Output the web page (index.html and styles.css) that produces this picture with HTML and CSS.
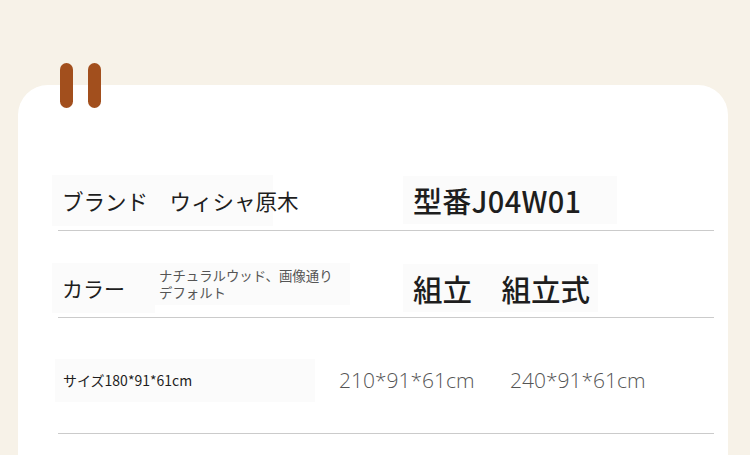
FILE: index.html
```html
<!DOCTYPE html>
<html lang="ja">
<head>
<meta charset="utf-8">
<link rel="stylesheet" href="styles.css">
</head>
<body>
<div class="page">
  <div class="tabs">
    <span class="tab tab-a"></span>
    <span class="tab tab-b"></span>
  </div>
  <div class="card">
    <div class="row row-1">
      <div class="cell lbl-1">ブランド　ウィシャ原木</div>
      <div class="cell val-1">型番J04W01</div>
    </div>
    <div class="row row-2">
      <div class="cell lbl-2">カラー</div>
      <div class="cell note"><span class="note-line">ナチュラルウッド、画像通り</span><span class="note-line">デフォルト</span></div>
      <div class="cell val-2">組立　組立式</div>
    </div>
    <div class="row row-3">
      <div class="cell lbl-3">サイズ180*91*61cm</div>
      <div class="size size-a">210*91*61cm</div>
      <div class="size size-b">240*91*61cm</div>
    </div>
  </div>
</div>
</body>
</html>
```
FILE: styles.css
```css
* { box-sizing: border-box; }
html, body { margin: 0; padding: 0; }
body {
  background: #f7f2e8;
  font-family: "Noto Sans CJK JP", "Noto Sans", sans-serif;
  color: #1e1e1e;
  overflow: hidden;
}
.page {
  position: relative;
  width: 750px;
  height: 455px;
  padding-top: 85px;
  overflow: hidden;
}
.tabs { position: absolute; left: 60px; top: 63px; }
.tab {
  position: absolute;
  top: 0;
  width: 13px;
  height: 45px;
  border-radius: 7px;
  background: #a24f1d;
}
.tab-a { left: 0; }
.tab-b { left: 28px; }
.card {
  margin-left: 18px;
  width: 710px;
  height: 370px;
  background: #ffffff;
  border-radius: 30px 30px 0 0;
  padding: 85px 14px 0 40px;
}
.row {
  display: flex;
  align-items: center;
  border-bottom: 1px solid #cbcbcb;
}
.cell {
  background: #fbfbfb;
  display: flex;
  align-items: center;
  white-space: nowrap;
}
.row-1 { height: 61px; }
.lbl-1 {
  margin-left: -6px;
  width: 221px;
  height: 51px;
  padding-left: 10px;
  font-size: 21.5px;
}
.val-1 {
  margin-left: 130px;
  width: 214px;
  height: 48px;
  padding-left: 10px;
  font-size: 29px;
  font-weight: 500;
  letter-spacing: 0.3px;
}
.row-2 { height: 87px; padding-top: 28px; }
.lbl-2 {
  margin-left: -6px;
  width: 103px;
  height: 50px;
  padding-left: 10px;
  font-size: 21px;
}
.note {
  width: 195px;
  height: 42px;
  padding-left: 4px;
  flex-direction: column;
  align-items: flex-start;
  justify-content: center;
  font-size: 13.4px;
  color: #555;
  margin-top: -8px;
}
.note-line {
  display: block;
  height: 17px;
  line-height: 17px;
}
.val-2 {
  margin-left: 53px;
  height: 48px;
  padding: 0 8px 0 10px;
  font-size: 29.5px;
  font-weight: 500;
}
.row-3 { height: 116px; padding-top: 9px; }
.lbl-3 {
  margin-left: -3px;
  width: 260px;
  height: 43px;
  padding-left: 8px;
  font-size: 14px;
}
.size {
  font-family: "Open Sans", "Noto Sans", sans-serif;
  font-weight: 300;
  font-size: 21px;
  color: #555;
  white-space: nowrap;
}
.size-a { margin-left: 24px; width: 171px; }
```
